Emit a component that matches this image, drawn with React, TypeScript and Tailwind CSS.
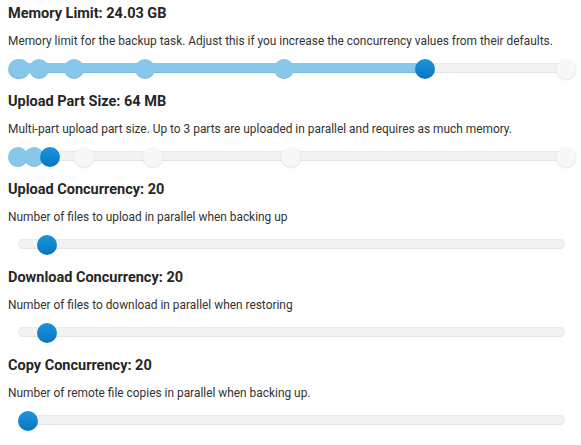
type Mark = { at: number; kind: "fill" | "active" | "idle" };

type SliderSpec = {
  title: string;
  desc: string;
  trackLeft: number;
  trackRight: number;
  fillTo?: number;
  marks: Mark[];
};

// thumb centers and track ends are measured in page pixels (x)
const sections: SliderSpec[] = [
  {
    title: "Memory Limit: 24.03 GB",
    desc: "Memory limit for the backup task. Adjust this if you increase the concurrency values from their defaults.",
    trackLeft: 10,
    trackRight: 576,
    fillTo: 425,
    marks: [
      { at: 18, kind: "fill" },
      { at: 20, kind: "fill" },
      { at: 39, kind: "fill" },
      { at: 74, kind: "fill" },
      { at: 145, kind: "fill" },
      { at: 284, kind: "fill" },
      { at: 566, kind: "idle" },
      { at: 425, kind: "active" },
    ],
  },
  {
    title: "Upload Part Size: 64 MB",
    desc: "Multi-part upload part size. Up to 3 parts are uploaded in parallel and requires as much memory.",
    trackLeft: 10,
    trackRight: 576,
    fillTo: 50,
    marks: [
      { at: 84, kind: "idle" },
      { at: 153, kind: "idle" },
      { at: 291, kind: "idle" },
      { at: 566, kind: "idle" },
      { at: 18, kind: "fill" },
      { at: 34, kind: "fill" },
      { at: 50, kind: "active" },
    ],
  },
  {
    title: "Upload Concurrency: 20",
    desc: "Number of files to upload in parallel when backing up",
    trackLeft: 18,
    trackRight: 565,
    marks: [{ at: 47, kind: "active" }],
  },
  {
    title: "Download Concurrency: 20",
    desc: "Number of files to download in parallel when restoring",
    trackLeft: 18,
    trackRight: 565,
    marks: [{ at: 47, kind: "active" }],
  },
  {
    title: "Copy Concurrency: 20",
    desc: "Number of remote file copies in parallel when backing up.",
    trackLeft: 18,
    trackRight: 565,
    marks: [{ at: 28, kind: "active" }],
  },
];

const thumbClass: Record<Mark["kind"], string> = {
  fill: "bg-[#86c7ea] shadow-[inset_0_-1px_0_rgba(0,0,0,0.08)]",
  active: "bg-gradient-to-b from-[#1a95dd] to-[#0a76c0]",
  idle: "bg-[#f7f7f7] shadow-[0_1px_2px_rgba(0,0,0,0.12)]",
};

function Slider({ spec }: { spec: SliderSpec }) {
  // container starts at page x = 8
  const off = 8;
  return (
    <div className="relative h-6 w-full">
      <div
        className="absolute top-[7px] h-[10px] rounded-full bg-[#f2f2f2] shadow-[inset_0_-1px_1px_rgba(0,0,0,0.06),inset_0_1px_0_rgba(0,0,0,0.03)]"
        style={{ left: spec.trackLeft - off, width: spec.trackRight - spec.trackLeft }}
      />
      {spec.fillTo && (
        <div
          className="absolute top-[7px] h-[10px] rounded-l-full bg-[#87c8ea] shadow-[inset_0_-1px_0_rgba(0,0,0,0.07)]"
          style={{ left: spec.trackLeft - off, width: spec.fillTo - spec.trackLeft }}
        />
      )}
      {spec.marks.map((m, i) => (
        <div
          key={i}
          className={`absolute top-[3px] h-5 w-5 rounded-full ${thumbClass[m.kind]}`}
          style={{ left: m.at - off - 10 }}
        />
      ))}
    </div>
  );
}

export default function App() {
  return (
    <div className="px-2 pt-1 font-['Roboto',sans-serif] text-[#333]">
      {sections.map((s) => (
        <div key={s.title} className="pb-3">
          <h3 className="h-5 text-[14.5px] font-bold leading-5 text-[#262626]">{s.title}</h3>
          <p className="mt-2 h-[18px] text-[11.9px] leading-[18px] text-[#333]">{s.desc}</p>
          <div className="mt-1.5">
            <Slider spec={s} />
          </div>
        </div>
      ))}
    </div>
  );
}
